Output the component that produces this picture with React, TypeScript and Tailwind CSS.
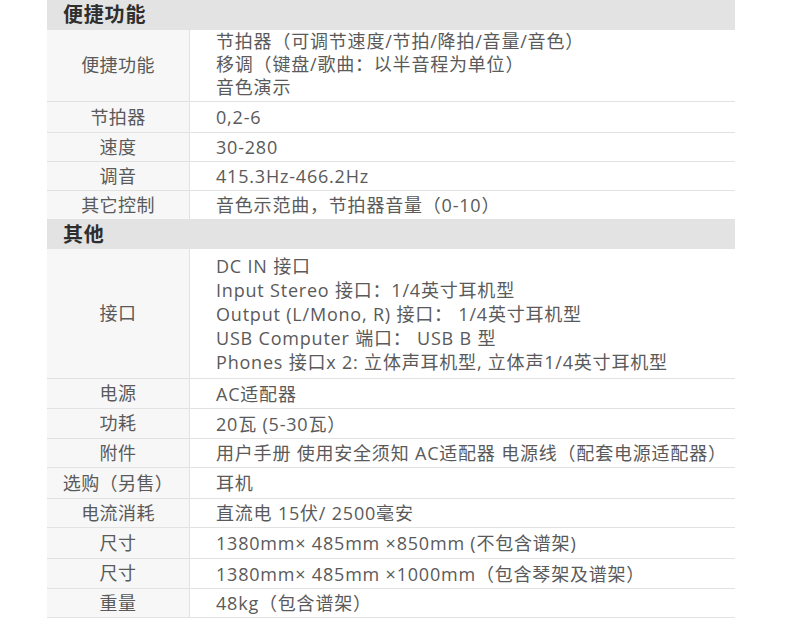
type Row = {
  label: string;
  lines: string[];
  h: string;
  lh?: string;
};

type Section = {
  title: string;
  h: string;
  rows: Row[];
};

const sections: Section[] = [
  {
    title: "便捷功能",
    h: "h-[30px]",
    rows: [
      {
        label: "便捷功能",
        lines: [
          "节拍器（可调节速度/节拍/降拍/音量/音色）",
          "移调（键盘/歌曲：以半音程为单位）",
          "音色演示",
        ],
        h: "h-[72px]",
        lh: "leading-[23px] pb-[2px]",
      },
      { label: "节拍器", lines: ["0,2-6"], h: "h-[31px]" },
      { label: "速度", lines: ["30-280"], h: "h-[29px]" },
      { label: "调音", lines: ["415.3Hz-466.2Hz"], h: "h-[29px]" },
      { label: "其它控制", lines: ["音色示范曲，节拍器音量（0-10）"], h: "h-[29px]" },
    ],
  },
  {
    title: "其他",
    h: "h-[29px]",
    rows: [
      {
        label: "接口",
        lines: [
          "DC IN 接口",
          "Input Stereo 接口：1/4英寸耳机型",
          "Output (L/Mono, R) 接口： 1/4英寸耳机型",
          "USB Computer 端口： USB B 型",
          "Phones 接口x 2: 立体声耳机型, 立体声1/4英寸耳机型",
        ],
        h: "h-[130px]",
      },
      { label: "电源", lines: ["AC适配器"], h: "h-[30px]" },
      { label: "功耗", lines: ["20瓦 (5-30瓦）"], h: "h-[30px]" },
      {
        label: "附件",
        lines: ["用户手册 使用安全须知 AC适配器 电源线（配套电源适配器）"],
        h: "h-[29px]",
      },
      { label: "选购（另售）", lines: ["耳机"], h: "h-[31px]" },
      { label: "电流消耗", lines: ["直流电 15伏/ 2500毫安"], h: "h-[29px]" },
      { label: "尺寸", lines: ["1380mm× 485mm ×850mm (不包含谱架)"], h: "h-[31px]" },
      { label: "尺寸", lines: ["1380mm× 485mm ×1000mm（包含琴架及谱架）"], h: "h-[30px]" },
      { label: "重量", lines: ["48kg（包含谱架）"], h: "h-[29px]" },
    ],
  },
];

function SpecRow({ row }: { row: Row }) {
  return (
    <div className={`flex border-b border-[#e2e2e2] ${row.h}`}>
      <div className="w-[143px] shrink-0 bg-[#f7f7f7] border-r border-[#e2e2e2] flex items-center justify-center tracking-[0.4px]">
        {row.label}
      </div>
      <div className={`flex-1 flex flex-col justify-center pl-[26px] ${row.lh ?? "leading-[24px]"}`}>
        {row.lines.map((line, i) => (
          <div key={i} className="whitespace-nowrap">
            {line}
          </div>
        ))}
      </div>
    </div>
  );
}

export default function App() {
  return (
    <div className="w-[790px] h-[631px] bg-white overflow-hidden">
      <div
        className="ml-[47px] w-[688px] text-[18px] tracking-[0.8px] text-[#5a5a5a]"
        style={{ fontFamily: '"Open Sans", "Noto Sans CJK SC", sans-serif' }}
      >
        {sections.map((section) => (
          <div key={section.title}>
            <div
              className={`bg-[#e3e3e3] flex items-center pl-[16px] text-[20px] font-bold text-[#2e2e2e] tracking-[0.8px] ${section.h}`}
            >
              {section.title}
            </div>
            {section.rows.map((row, i) => (
              <SpecRow key={i} row={row} />
            ))}
          </div>
        ))}
      </div>
    </div>
  );
}
